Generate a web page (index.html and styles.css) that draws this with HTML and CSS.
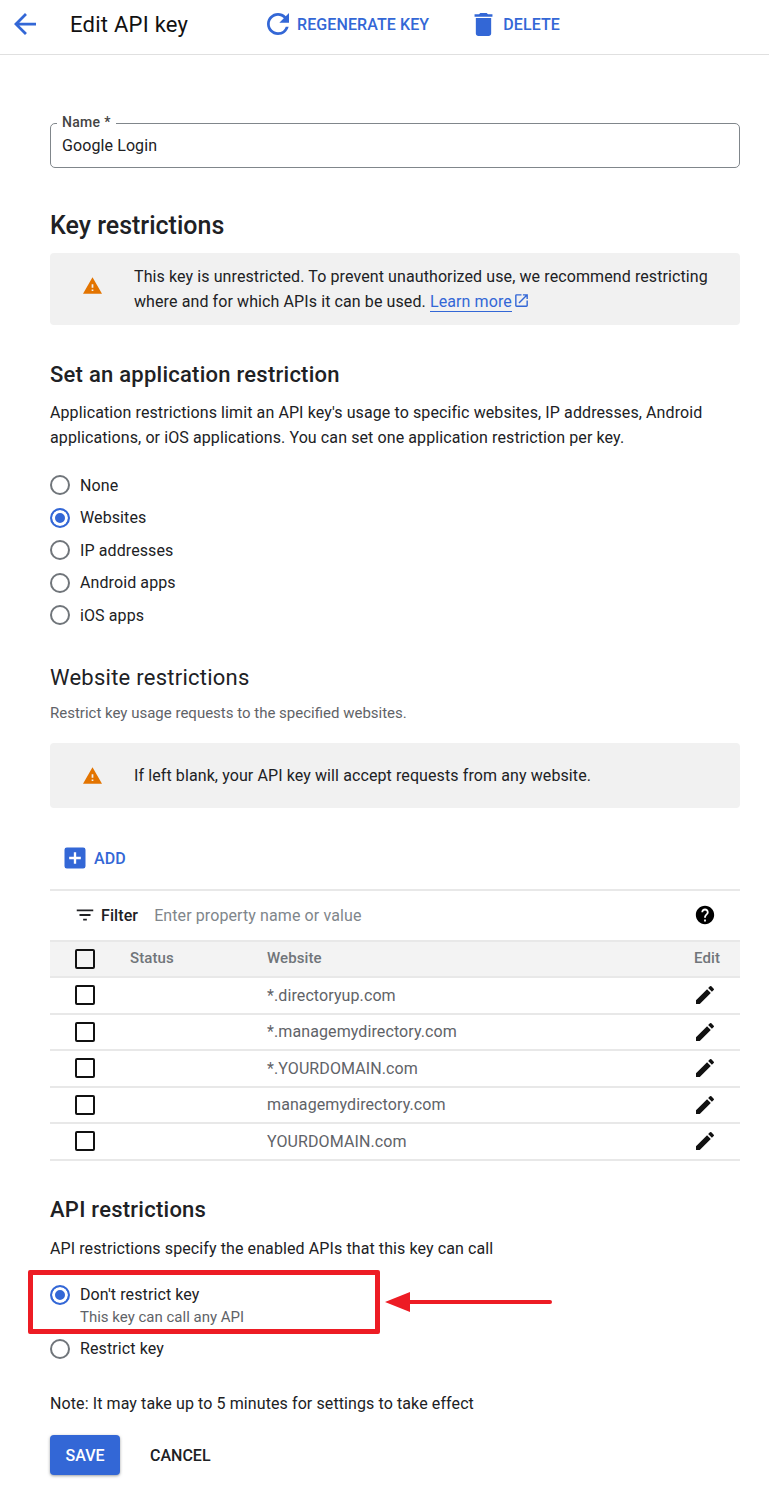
FILE: index.html
```html
<!DOCTYPE html>
<html>
<head>
  <title>Edit API key</title>
  <link rel="stylesheet" href="styles.css">
</head>
<body>
  <div class="topbar">
    <svg class="back-icon" viewBox="4 4 16 16"><path d="M20 11H7.83l5.59-5.59L12 4l-8 8 8 8 1.41-1.41L7.83 13H20v-2z"/></svg>
    <h1>Edit API key</h1>
    <button class="top-action regen">
      <svg viewBox="4 4 16 16"><path d="M17.65 6.35A7.958 7.958 0 0 0 12 4c-4.42 0-7.99 3.58-7.99 8s3.57 8 7.99 8c3.73 0 6.84-2.55 7.73-6h-2.08A5.99 5.99 0 0 1 12 18c-3.31 0-6-2.69-6-6s2.69-6 6-6c1.66 0 3.14.69 4.22 1.78L13 11h7V4l-2.35 2.35z"/></svg>
      REGENERATE KEY
    </button>
    <button class="top-action delete">
      <svg viewBox="5 3 14 18"><path d="M6 19c0 1.1.9 2 2 2h8c1.1 0 2-.9 2-2V7H6v12zM19 4h-3.5l-1-1h-5l-1 1H5v2h14V4z"/></svg>
      DELETE
    </button>
  </div>

  <div class="content">
    <div class="name-field">
      <label>Name *</label>
      <span>Google Login</span>
    </div>

    <h2 class="key-title">Key restrictions</h2>
    <div class="notice notice-tall">
      <svg class="warn-icon" viewBox="1 2 22 19"><path d="M1 21h22L12 2 1 21zm12-3h-2v-2h2v2zm0-4h-2v-4h2v4z"/></svg>
      <p>This key is unrestricted. To prevent unauthorized use, we recommend restricting where and for which APIs it can be used. <a href="#">Learn more</a><svg class="ext-icon" viewBox="0 0 24 24"><path d="M19 19H5V5h7V3H5a2 2 0 0 0-2 2v14a2 2 0 0 0 2 2h14c1.1 0 2-.9 2-2v-7h-2v7zM14 3v2h3.59l-9.83 9.83 1.41 1.41L19 6.41V10h2V3h-7z"/></svg></p>
    </div>

    <h3 class="app-title">Set an application restriction</h3>
    <p class="desc">Application restrictions limit an API key's usage to specific websites, IP addresses, Android applications, or iOS applications. You can set one application restriction per key.</p>

    <div class="radios">
      <div class="radio-row"><span class="radio"></span>None</div>
      <div class="radio-row"><span class="radio on"></span>Websites</div>
      <div class="radio-row"><span class="radio"></span>IP addresses</div>
      <div class="radio-row"><span class="radio"></span>Android apps</div>
      <div class="radio-row"><span class="radio"></span>iOS apps</div>
    </div>

    <h3 class="site-title">Website restrictions</h3>
    <p class="hint">Restrict key usage requests to the specified websites.</p>
    <div class="notice notice-short">
      <svg class="warn-icon" viewBox="1 2 22 19"><path d="M1 21h22L12 2 1 21zm12-3h-2v-2h2v2zm0-4h-2v-4h2v4z"/></svg>
      <p>If left blank, your API key will accept requests from any website.</p>
    </div>

    <div class="add-row">
      <svg class="add-icon" viewBox="0 0 24 24"><path d="M19 3H5a2 2 0 0 0-2 2v14a2 2 0 0 0 2 2h14a2 2 0 0 0 2-2V5a2 2 0 0 0-2-2zm-2 10h-4v4h-2v-4H7v-2h4V7h2v4h4v2z"/></svg>
      ADD
    </div>

    <div class="table">
      <div class="filter-row">
        <svg class="filter-icon" viewBox="0 0 24 24"><path d="M10 18h4v-2h-4v2zM3 6v2h18V6H3zm3 7h12v-2H6v2z"/></svg>
        <b>Filter</b>
        <span class="filter-input">Enter property name or value</span>
        <svg class="help-icon" viewBox="0 0 24 24"><path d="M12 2C6.48 2 2 6.48 2 12s4.48 10 10 10 10-4.48 10-10S17.52 2 12 2zm1 17h-2v-2h2v2zm2.07-7.75-.9.92C13.45 12.9 13 13.5 13 15h-2v-.5c0-1.1.45-2.1 1.17-2.83l1.24-1.26c.37-.36.59-.86.59-1.41 0-1.1-.9-2-2-2s-2 .9-2 2H8c0-2.21 1.79-4 4-4s4 1.79 4 4c0 .88-.36 1.68-.93 2.25z"/></svg>
      </div>
      <div class="table-row table-head">
        <span class="check"></span>
        <span class="col-status">Status</span>
        <span class="col-site">Website</span>
        <span class="col-edit">Edit</span>
      </div>
      <div class="table-row">
        <span class="check"></span><span class="col-status"></span><span class="col-site">*.directoryup.com</span>
        <svg class="edit-icon" viewBox="0 0 24 24"><path d="M3 17.25V21h3.75L17.81 9.94l-3.75-3.75L3 17.25zM20.71 7.04a1 1 0 0 0 0-1.41l-2.34-2.34a1 1 0 0 0-1.41 0l-1.83 1.83 3.75 3.75 1.83-1.83z"/></svg>
      </div>
      <div class="table-row">
        <span class="check"></span><span class="col-status"></span><span class="col-site">*.managemydirectory.com</span>
        <svg class="edit-icon" viewBox="0 0 24 24"><path d="M3 17.25V21h3.75L17.81 9.94l-3.75-3.75L3 17.25zM20.71 7.04a1 1 0 0 0 0-1.41l-2.34-2.34a1 1 0 0 0-1.41 0l-1.83 1.83 3.75 3.75 1.83-1.83z"/></svg>
      </div>
      <div class="table-row">
        <span class="check"></span><span class="col-status"></span><span class="col-site">*.YOURDOMAIN.com</span>
        <svg class="edit-icon" viewBox="0 0 24 24"><path d="M3 17.25V21h3.75L17.81 9.94l-3.75-3.75L3 17.25zM20.71 7.04a1 1 0 0 0 0-1.41l-2.34-2.34a1 1 0 0 0-1.41 0l-1.83 1.83 3.75 3.75 1.83-1.83z"/></svg>
      </div>
      <div class="table-row">
        <span class="check"></span><span class="col-status"></span><span class="col-site">managemydirectory.com</span>
        <svg class="edit-icon" viewBox="0 0 24 24"><path d="M3 17.25V21h3.75L17.81 9.94l-3.75-3.75L3 17.25zM20.71 7.04a1 1 0 0 0 0-1.41l-2.34-2.34a1 1 0 0 0-1.41 0l-1.83 1.83 3.75 3.75 1.83-1.83z"/></svg>
      </div>
      <div class="table-row">
        <span class="check"></span><span class="col-status"></span><span class="col-site">YOURDOMAIN.com</span>
        <svg class="edit-icon" viewBox="0 0 24 24"><path d="M3 17.25V21h3.75L17.81 9.94l-3.75-3.75L3 17.25zM20.71 7.04a1 1 0 0 0 0-1.41l-2.34-2.34a1 1 0 0 0-1.41 0l-1.83 1.83 3.75 3.75 1.83-1.83z"/></svg>
      </div>
    </div>

    <h3 class="api-title">API restrictions</h3>
    <p class="api-desc">API restrictions specify the enabled APIs that this key can call</p>

    <div class="api-radio">
      <span class="radio on"></span>
      <div>
        <div>Don't restrict key</div>
        <div class="sub">This key can call any API</div>
      </div>
    </div>
    <div class="radio-row restrict"><span class="radio"></span>Restrict key</div>

    <p class="note">Note: It may take up to 5 minutes for settings to take effect</p>

    <div class="buttons">
      <button class="save-button">SAVE</button>
      <button class="cancel-button">CANCEL</button>
    </div>
  </div>

  <!-- annotation on top of the screenshot -->
  <div class="red-box"></div>
  <svg class="red-arrow" width="170" height="30" viewBox="0 0 170 30"><path d="M26 15H166" stroke="#ed1c24" stroke-width="4" stroke-linecap="round"/><path d="M1 15 26 5V25Z" fill="#ed1c24"/></svg>
</body>
</html>
```

FILE: styles.css
```css
body {
  font-family: Roboto, "Liberation Sans", sans-serif;
  font-size: 16px;
  letter-spacing: .1px;
  color: #202124;
  background-color: #fff;
  margin: 0;
  padding: 0;
  position: relative;
  height: 1509px;
  overflow: hidden;
}

svg {
  display: block;
  flex-shrink: 0;
}

p {
  margin: 0;
}

.topbar {
  display: flex;
  align-items: center;
  box-sizing: border-box;
  height: 55px;
  padding-bottom: 6px;
  border-bottom: 1px solid #e0e0e0;
}

.back-icon {
  width: 22px;
  height: 22px;
  margin-left: 14px;
  fill: #3367d6;
}

.topbar h1 {
  font-size: 22px;
  font-weight: 400;
  letter-spacing: .25px;
  color: #111;
  margin: 0 0 0 34px;
  width: 197px;
}

.top-action {
  display: flex;
  align-items: center;
  padding: 0;
  background: none;
  border: none;
  font-family: inherit;
  font-size: 16px;
  font-weight: 500;
  letter-spacing: .1px;
  color: #3367d6;
}

.top-action svg {
  fill: #3367d6;
}

.regen svg {
  width: 22px;
  height: 22px;
  margin-right: 8px;
}

.delete {
  margin-left: 45px;
}

.delete svg {
  width: 19px;
  height: 23px;
  margin-right: 10px;
}

.content {
  width: 690px;
  margin-left: 50px;
}

.name-field {
  position: relative;
  box-sizing: border-box;
  height: 45px;
  margin-top: 68px;
  padding: 12px 11px 0;
  border: 1px solid #80868b;
  border-radius: 5px;
}

.name-field label {
  position: absolute;
  top: -10px;
  left: 6px;
  padding: 0 5px;
  font-size: 14px;
  font-weight: 500;
  letter-spacing: .3px;
  color: #444;
  background-color: #fff;
}

.key-title {
  font-size: 25px;
  font-weight: 500;
  letter-spacing: 0;
  line-height: 30px;
  margin: 43px 0 12px;
}

.notice {
  display: flex;
  align-items: center;
  box-sizing: border-box;
  background-color: #f1f1f1;
  border-radius: 4px;
}

.notice-tall {
  height: 72px;
}

.notice-tall .warn-icon {
  margin-bottom: 7px;
}

.notice-short {
  height: 65px;
  margin-top: 21px;
}

.notice p {
  line-height: 25px;
}

.warn-icon {
  width: 19px;
  height: 17px;
  margin: 0 32px 0 33px;
  fill: #e37400;
}

.notice a {
  color: #3367d6;
  text-decoration: none;
  border-bottom: 1px solid #3367d6;
}

.ext-icon {
  display: inline-block;
  width: 17px;
  height: 17px;
  margin-left: 1px;
  vertical-align: -2px;
  fill: #3367d6;
}

h3 {
  font-size: 22px;
  letter-spacing: .25px;
  line-height: 28px;
  margin: 0;
}

.app-title {
  font-weight: 500;
  margin-top: 36px;
}

.desc {
  line-height: 25px;
  margin-top: 11px;
}

.radios {
  margin-top: 19px;
}

.radio-row {
  display: flex;
  align-items: center;
  height: 32.5px;
}

.radio {
  box-sizing: border-box;
  display: block;
  width: 20px;
  height: 20px;
  margin-right: 10px;
  border: 2px solid #70757a;
  border-radius: 50%;
  flex-shrink: 0;
}

.radio.on {
  border-color: #3367d6;
  background-color: #3367d6;
  box-shadow: inset 0 0 0 3px #fff;
}

.site-title {
  font-weight: 400;
  margin-top: 32px;
}

.hint {
  font-size: 15px;
  letter-spacing: 0;
  color: #5f6368;
  margin-top: 12px;
  line-height: 18px;
}

.add-row {
  display: flex;
  align-items: center;
  box-sizing: border-box;
  height: 81px;
  padding: 20px 0 0 11px;
  font-weight: 500;
  color: #3367d6;
}

.add-icon {
  width: 28px;
  height: 28px;
  margin-right: 5px;
  fill: #3367d6;
}

.table {
  border-top: 2px solid #e8e8e8;
}

.filter-row {
  display: flex;
  align-items: center;
  height: 49px;
  padding-left: 24px;
}

.filter-row b {
  font-weight: 500;
  margin-right: 16px;
}

.filter-icon {
  width: 22px;
  height: 22px;
  margin-right: 5px;
  fill: #202124;
}

.filter-input {
  color: #80868b;
  flex-grow: 1;
}

.help-icon {
  width: 22px;
  height: 22px;
  margin-right: 24px;
  fill: #000;
}

.table-row {
  display: flex;
  align-items: center;
  height: 34.5px;
  border-bottom: 2px solid #e8e8e8;
  color: #5f6368;
}

.table-head {
  background-color: #f3f3f3;
  border-top: 2px solid #e8e8e8;
  font-size: 15px;
  font-weight: 500;
  color: #70757a;
}

.table-head span:not(.check) {
  margin-bottom: 2px;
}

.check {
  box-sizing: border-box;
  width: 20px;
  height: 20px;
  margin-left: 25px;
  border: 2px solid #111;
  border-radius: 2px;
  flex-shrink: 0;
}

.col-status {
  width: 137px;
  margin-left: 35px;
}

.col-site {
  flex-grow: 1;
}

.col-edit {
  margin-right: 20px;
}

.edit-icon {
  width: 24px;
  height: 24px;
  margin-right: 23px;
  fill: #111;
}

.api-title {
  font-weight: 500;
  margin-top: 35px;
}

.api-desc {
  margin-top: 15px;
  line-height: 20px;
}

.api-radio {
  display: flex;
  margin-top: 26px;
  line-height: 20px;
}

.sub {
  font-size: 15px;
  letter-spacing: 0;
  color: #5f6368;
  margin-top: 2px;
}

.restrict {
  margin-top: 6px;
}

.note {
  margin-top: 29px;
  line-height: 20px;
}

.buttons {
  display: flex;
  align-items: center;
  margin-top: 21px;
}

.save-button {
  width: 70px;
  height: 40px;
  background-color: #3367d6;
  color: #fff;
  border: none;
  border-radius: 4px;
  font-family: inherit;
  font-size: 16px;
  font-weight: 500;
  box-shadow: 0 1px 3px rgba(60, 64, 67, .5);
}

.cancel-button {
  margin-left: 30px;
  padding: 0;
  background: none;
  border: none;
  font-family: inherit;
  font-size: 16px;
  font-weight: 500;
  color: #202124;
}

.red-box {
  position: absolute;
  left: 28px;
  top: 1270px;
  width: 352px;
  height: 64px;
  box-sizing: border-box;
  border: 5px solid #ed1c24;
  border-radius: 2px;
}

.red-arrow {
  position: absolute;
  left: 384px;
  top: 1287px;
}
```
